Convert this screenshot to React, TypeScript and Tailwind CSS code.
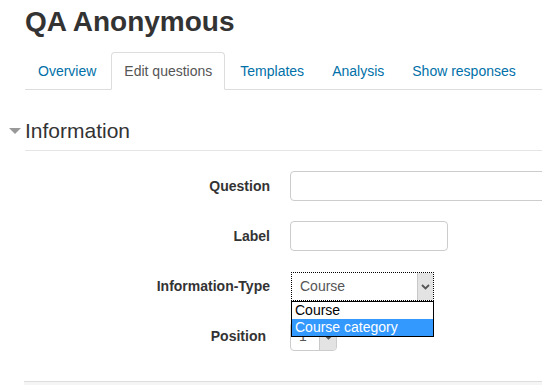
import React from 'react';

const tabs = ['Overview', 'Edit questions', 'Templates', 'Analysis', 'Show responses'];

const Chevron: React.FC = () => (
  <svg width="9" height="6" viewBox="0 0 9 6" fill="none">
    <path d="M1 1 L4.5 4.5 L8 1" stroke="#555" strokeWidth="1.8" />
  </svg>
);

export default function App() {
  return (
    <div
      className="w-[542px] h-[385px] overflow-hidden bg-white text-[#333] text-[14px]"
      style={{ fontFamily: '"Liberation Sans", Arial, sans-serif' }}
    >
      <h2 className="pl-[25px] pt-[6px] text-[28px] leading-[32px] font-bold text-[#333]">QA Anonymous</h2>

      {/* tabs */}
      <ul className="ml-[25px] mt-[14px] flex border-b border-[#ddd]">
        {tabs.map((t) => {
          const active = t === 'Edit questions';
          return (
            <li key={t} className="-mb-px mr-[2px]">
              <a
                className={
                  active
                    ? 'block px-3 py-2 leading-5 border border-[#ddd] border-b-transparent rounded-t-[4px] bg-white text-[#555]'
                    : 'block px-3 py-2 leading-5 border border-transparent rounded-t-[4px] text-[#0070a8]'
                }
              >
                {t}
              </a>
            </li>
          );
        })}
      </ul>

      {/* section heading */}
      <div className="ml-[25px] mt-[26px] pb-[4px] border-b border-[#e5e5e5] flex items-center">
        <span className="-ml-[16px] mr-[4px] w-0 h-0 border-l-[6px] border-r-[6px] border-t-[6px] border-l-transparent border-r-transparent border-t-[#999]" />
        <span className="text-[21px] leading-[30px] text-[#333]">Information</span>
      </div>

      <div className="mt-[20px]">
        <div className="flex items-start mb-[20px]">
          <label className="w-[270px] shrink-0 pt-[5px] leading-5 text-right font-bold">Question</label>
          <div className="ml-[20px] w-[300px] h-[30px] shrink-0 border border-[#ccc] rounded-[4px] bg-white" />
        </div>

        <div className="flex items-start mb-[20px]">
          <label className="w-[270px] shrink-0 pt-[5px] leading-5 text-right font-bold">Label</label>
          <div className="ml-[20px] w-[158px] h-[30px] border border-[#ccc] rounded-[4px] bg-white" />
        </div>

        <div className="flex items-start mb-[20px]">
          <label className="w-[270px] shrink-0 pt-[5px] leading-5 text-right font-bold">Information-Type</label>
          <div className="relative ml-[21px] mt-px z-10">
            <div className="w-[143px] h-[29px] flex border border-dotted border-black bg-white">
              <span className="flex-1 pl-[8px] leading-[27px] text-[#555]">Course</span>
              <span className="w-[16px] flex items-center justify-center bg-[#e3e3e3] border-l border-[#c8c8c8]">
                <Chevron />
              </span>
            </div>
            <div className="absolute left-0 top-full w-[143px] border border-black bg-white">
              <div className="h-[17px] leading-[17px] pl-[3px] text-black">Course</div>
              <div className="h-[17px] leading-[17px] pl-[3px] bg-[#3399ff] text-white">Course category</div>
            </div>
          </div>
        </div>

        <div className="flex items-start mb-[20px]">
          <label className="w-[270px] shrink-0 pt-[5px] pr-[4px] leading-5 text-right font-bold">Position</label>
          <div className="ml-[20px] mt-px w-[47px] h-[29px] flex border border-[#ccc] rounded-[4px] bg-white overflow-hidden">
            <span className="flex-1 pl-[8px] leading-[27px] text-[#555]">1</span>
            <span className="w-[17px] flex items-center justify-center bg-[#e3e3e3] border-l border-[#c8c8c8]">
              <Chevron />
            </span>
          </div>
        </div>
      </div>

      <div className="ml-[24px] mt-[30px] h-[40px] border-t border-[#ddd] bg-[#f5f5f5]" />
    </div>
  );
}
